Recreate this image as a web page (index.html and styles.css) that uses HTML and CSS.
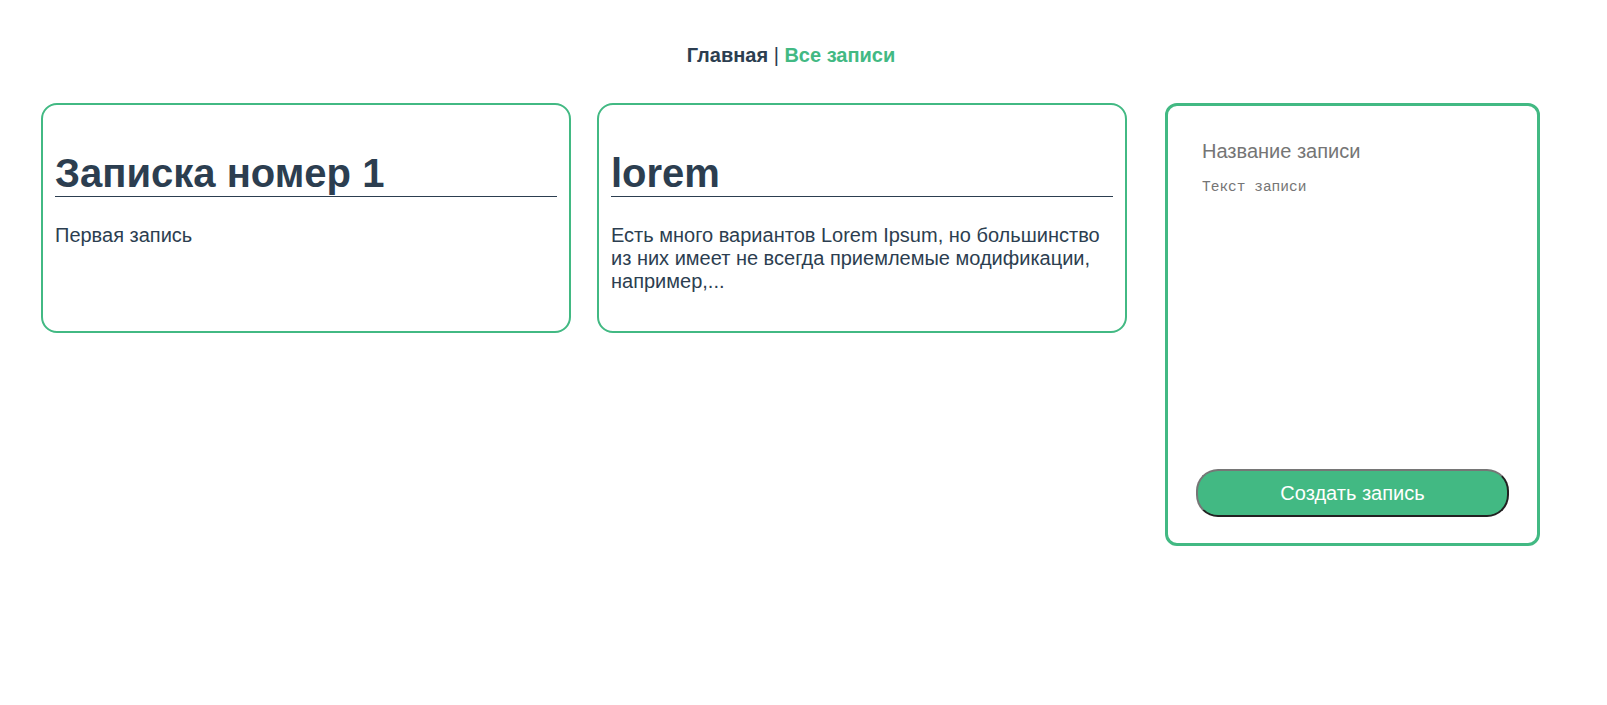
FILE: index.html
```html
<!DOCTYPE html>
<html lang="ru">
<head>
<meta charset="utf-8">
<title>Записки</title>
<link rel="stylesheet" href="styles.css">
</head>
<body>
<div class="app">
  <nav class="nav">
    <a href="#" class="nav-link">Главная</a> | <a href="#" class="nav-link active">Все записи</a>
  </nav>
  <main class="board">
    <div class="notes">
      <article class="card">
        <h1 class="card-title">Записка номер 1</h1>
        <p class="card-text">Первая запись</p>
      </article>
      <article class="card">
        <h1 class="card-title">lorem</h1>
        <p class="card-text">Есть много вариантов Lorem Ipsum, но большинство из них имеет не всегда приемлемые модификации, например,...</p>
      </article>
    </div>
    <form class="note-form">
      <input class="form-input" type="text" placeholder="Название записи">
      <textarea class="form-textarea" placeholder="Текст записи"></textarea>
      <button class="form-button" type="button">Создать запись</button>
    </form>
  </main>
</div>
</body>
</html>
```
FILE: styles.css
```css
html, body {
  margin: 0;
  padding: 0;
  background: #ffffff;
}

.app {
  font-family: "Liberation Sans", Arial, sans-serif;
  color: #2c3e50;
}

.nav {
  padding: 44px 25px 0 0;
  height: 66px;
  box-sizing: border-box;
  text-align: center;
  font-size: 20px;
  line-height: 23px;
}

.nav-link {
  font-weight: bold;
  color: #2c3e50;
  text-decoration: none;
}

.nav-link.active {
  color: #42b983;
}

.board {
  display: flex;
  align-items: flex-start;
  padding: 37px 67px 0 41px;
}

.notes {
  display: flex;
  gap: 26px;
  flex: 1;
}

.card {
  box-sizing: border-box;
  width: 530px;
  height: 230px;
  border: 2px solid #42b983;
  border-radius: 16px;
  padding: 0 12px;
}

.card-title {
  margin: 45px 0 0;
  font-size: 40px;
  line-height: 46px;
  padding-bottom: 0;
  border-bottom: 1px solid #2c3e50;
  font-weight: bold;
}

.card-text {
  margin: 27px 0 0;
  font-size: 20px;
  line-height: 23px;
}

.note-form {
  box-sizing: border-box;
  width: 375px;
  height: 443px;
  margin-left: 37px;
  border: 3px solid #42b983;
  border-radius: 12px;
  padding: 28px 28px 26px;
  display: flex;
  flex-direction: column;
}

.form-input {
  font-family: "Liberation Sans", Arial, sans-serif;
  font-size: 20px;
  line-height: 23px;
  border: none;
  outline: none;
  padding: 6px 6px 4px;
  color: #2c3e50;
}

.form-input::placeholder {
  color: #757575;
}

.form-textarea {
  flex: 1;
  font-family: "Liberation Mono", "DejaVu Sans Mono", monospace;
  font-size: 14.5px;
  border: none;
  outline: none;
  resize: none;
  padding: 6px 6px;
  margin-top: 6px;
  margin-bottom: 18px;
}

.form-textarea::placeholder {
  color: #757575;
}

.form-button {
  height: 48px;
  border: 2px outset #767676;
  border-radius: 22px;
  background: #42b983;
  color: #ffffff;
  font-family: "Liberation Sans", Arial, sans-serif;
  font-size: 20px;
}
```
